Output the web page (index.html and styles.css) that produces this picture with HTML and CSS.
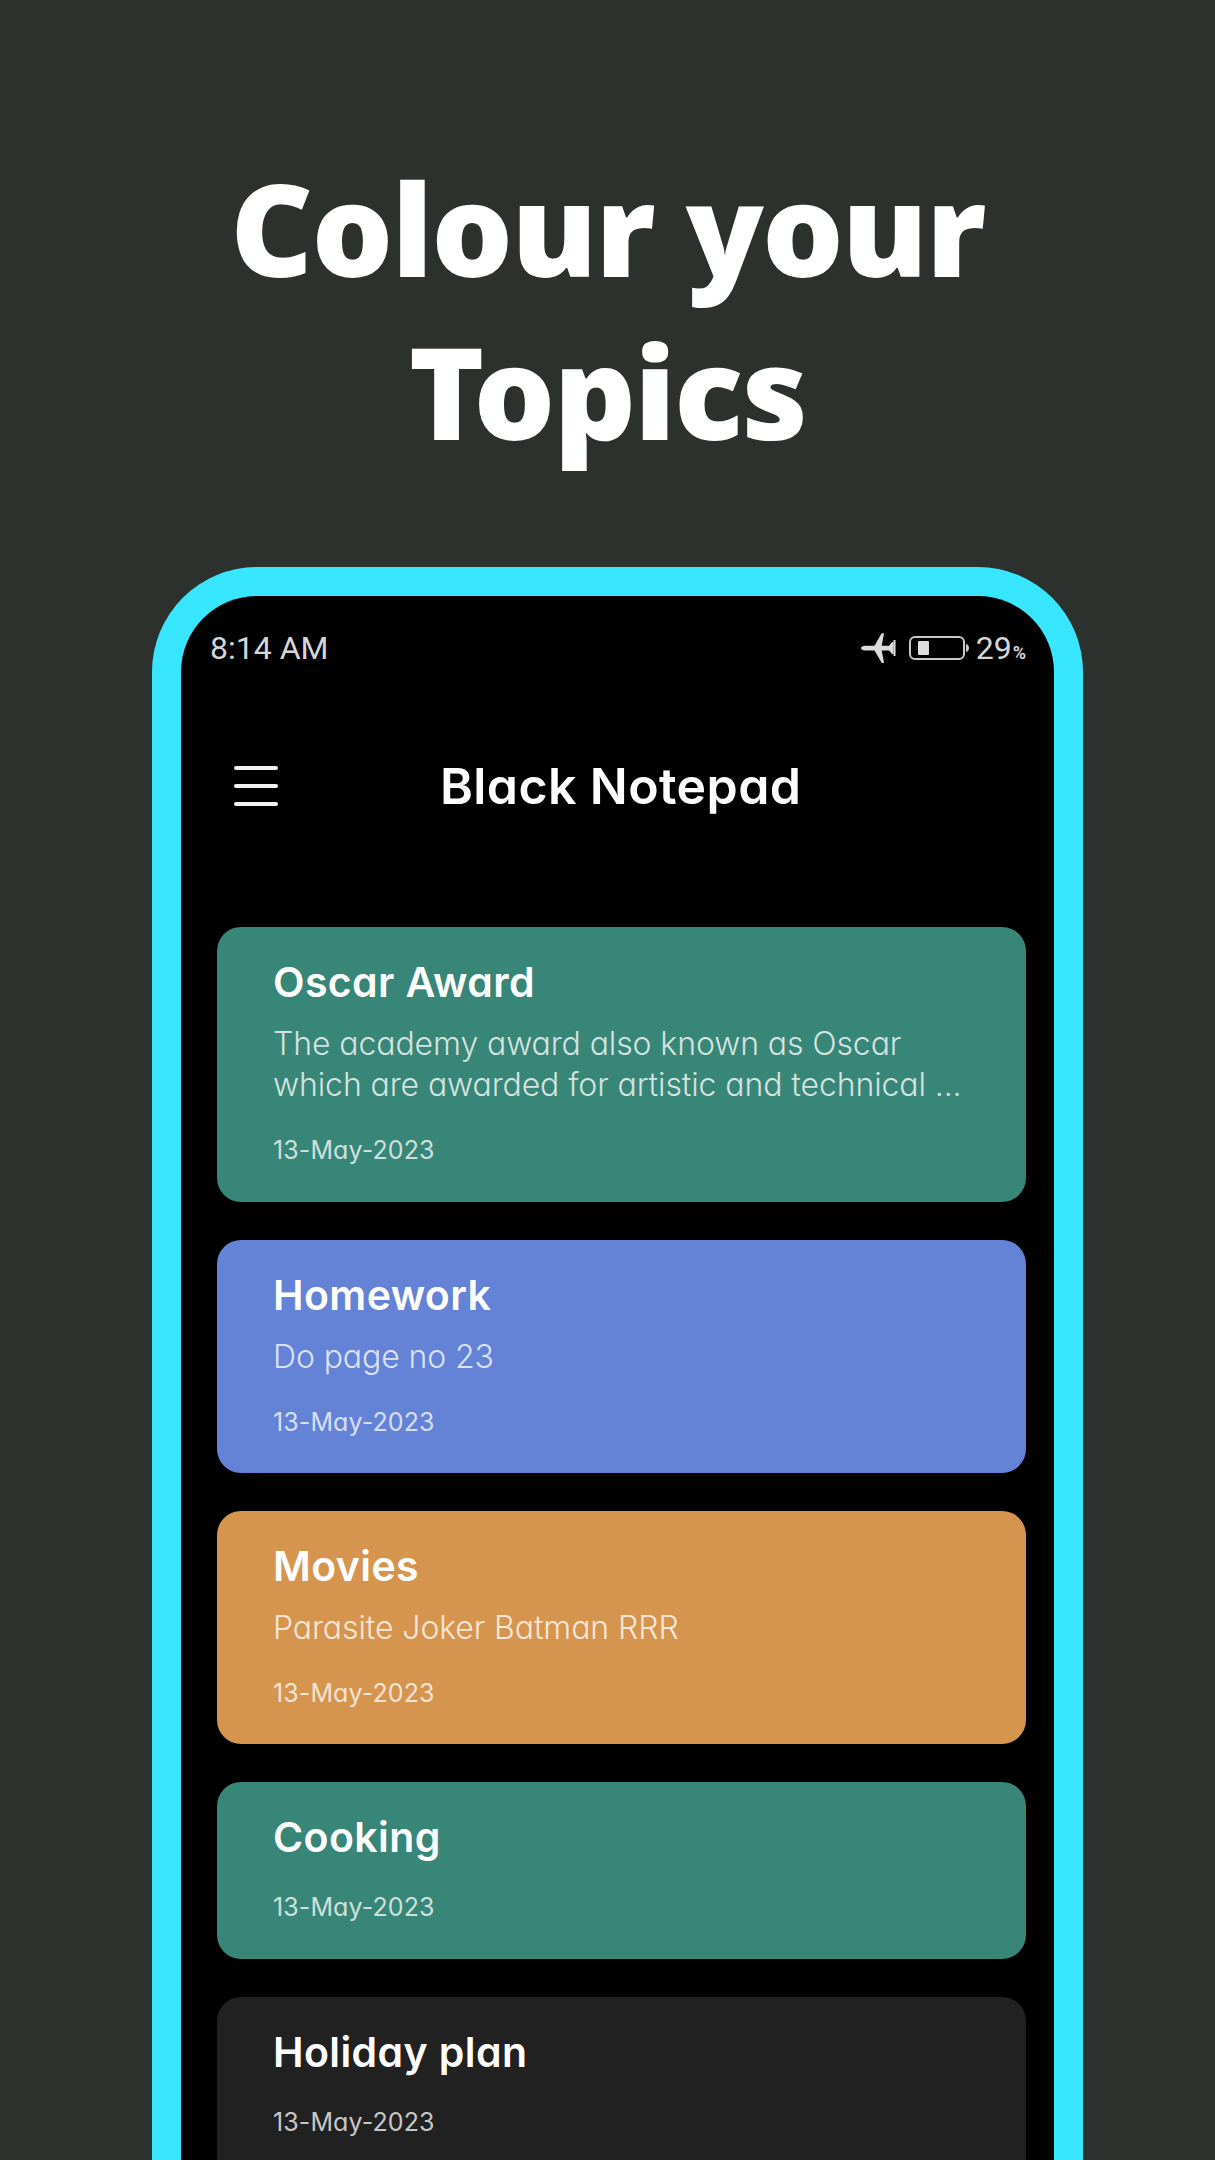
FILE: index.html
```html
<!DOCTYPE html>
<html lang="en">
<head>
<meta charset="utf-8">
<title>Black Notepad</title>
<link rel="stylesheet" href="styles.css">
</head>
<body>
<main class="page">
  <h1 class="headline">Colour your<br>Topics</h1>
  <section class="phone">
    <div class="status">
      <span class="clock">8:14 AM</span>
      <div class="status-right">
        <svg class="plane" viewBox="0 0 35 30" aria-hidden="true"><path d="M0 15c0-1.300 1.800-2.300 4-2.300h9.500L20.500.5c.300-.4 1.200-.5 2.500-.2l-2.300 12.400h7.300L31 9h1.500v12H31l-3-3.500h-7.300L23 29.800c-1.300.3-2.200.2-2.500-.2l-7-12.100H4c-2.200 0-4-1.200-4-2.500z" fill="#dcdcdc"/><rect x="32.500" y="7" width="2" height="16" fill="#dcdcdc"/></svg>
        <svg class="battery" viewBox="0 0 60 24" aria-hidden="true"><rect x="1" y="1" width="54" height="22" rx="5" fill="none" stroke="#c8c8c8" stroke-width="2"/><rect x="9" y="5" width="11" height="14" rx="1" fill="#dedede"/><path d="M57 8c2 .5 3 2 3 4s-1 3.500-3 4z" fill="#c8c8c8"/></svg>
        <span class="level">29<small>%</small></span>
      </div>
    </div>
    <header class="appbar">
      <div class="menu" aria-label="Menu"><span></span><span></span><span></span></div>
      <div class="app-title">Black Notepad</div>
    </header>
    <div class="notes">
      <article class="note green tall">
        <h2>Oscar Award</h2>
        <p>The academy award also known as Oscar<br>which are awarded for artistic and technical ...</p>
        <time>13-May-2023</time>
      </article>
      <article class="note blue mid">
        <h2>Homework</h2>
        <p>Do page no 23</p>
        <time>13-May-2023</time>
      </article>
      <article class="note orange mid">
        <h2>Movies</h2>
        <p>Parasite Joker Batman RRR</p>
        <time>13-May-2023</time>
      </article>
      <article class="note green">
        <h2>Cooking</h2>
        <time>13-May-2023</time>
      </article>
      <article class="note dark">
        <h2>Holiday plan</h2>
        <time>13-May-2023</time>
      </article>
    </div>
  </section>
</main>
</body>
</html>
```
FILE: styles.css
```css
html, body { margin: 0; padding: 0; height: 2160px; overflow: hidden; background: #2d312e; }
.page { display: flex; flex-direction: column; align-items: center; height: 2160px; overflow: hidden; font-family: "Inter", "Liberation Sans", sans-serif; font-feature-settings: "cv11" 1; color: #fff; }
.headline { margin: 0; padding-top: 146px; height: 567px; flex: none; box-sizing: border-box; font-family: "Noto Sans", sans-serif; font-weight: 900; font-size: 128px; letter-spacing: -1.6px; line-height: 163px; text-align: center; }
.phone { box-sizing: border-box; width: 931px; height: 1700px; flex: none; margin-left: 20px; border: 29px solid #38e6ff; border-bottom: 0; border-radius: 105px 105px 0 0; background: #000; }
.status { display: flex; justify-content: space-between; align-items: center; height: 104px; padding: 0 28px 0 29px; box-sizing: border-box; font-family: "Roboto", sans-serif; font-size: 32px; color: #d6d6d6; }
.status-right { display: flex; align-items: center; }
.plane { width: 35px; height: 30px; margin-right: 13px; }
.battery { width: 60px; height: 24px; margin-right: 7px; }
.level { font-size: 32px; }
.level small { font-size: 18px; font-weight: 700; margin-left: 1px; }
.appbar { display: flex; align-items: center; height: 172px; box-sizing: border-box; padding: 0 0 0 53px; }
.menu { display: flex; flex-direction: column; gap: 14px; width: 44px; }
.menu span { display: block; height: 4px; border-radius: 2px; background: #f2f2f2; }
.app-title { margin-left: 162px; font-size: 50px; font-weight: 600; letter-spacing: .4px; white-space: nowrap; }
.notes { display: flex; flex-direction: column; gap: 38px; padding: 55px 28px 0 36px; }
.note { box-sizing: border-box; border-radius: 24px; padding: 0 20px 0 56px; display: flow-root; height: 177px; flex: none; }
.mid { height: 233px; }
.tall { height: 275px; }
.note h2 { margin: 26px 0 0; font-size: 41px; line-height: 58px; font-weight: 600; letter-spacing: .4px; color: #fff; }
.note p { margin: 12px 0 0; font-size: 32px; line-height: 41px; color: rgba(255,255,255,.78); font-weight: 300; letter-spacing: -.1px; }
.note time { display: block; margin-top: 24px; font-size: 25px; line-height: 34px; letter-spacing: .1px; color: rgba(255,255,255,.76); }
.note p + time { margin-top: 28px; }
.green { background: #388677; }
.blue { background: #6482d6; }
.orange { background: #d6954e; }
.dark { background: #212121; height: 300px; }
```
